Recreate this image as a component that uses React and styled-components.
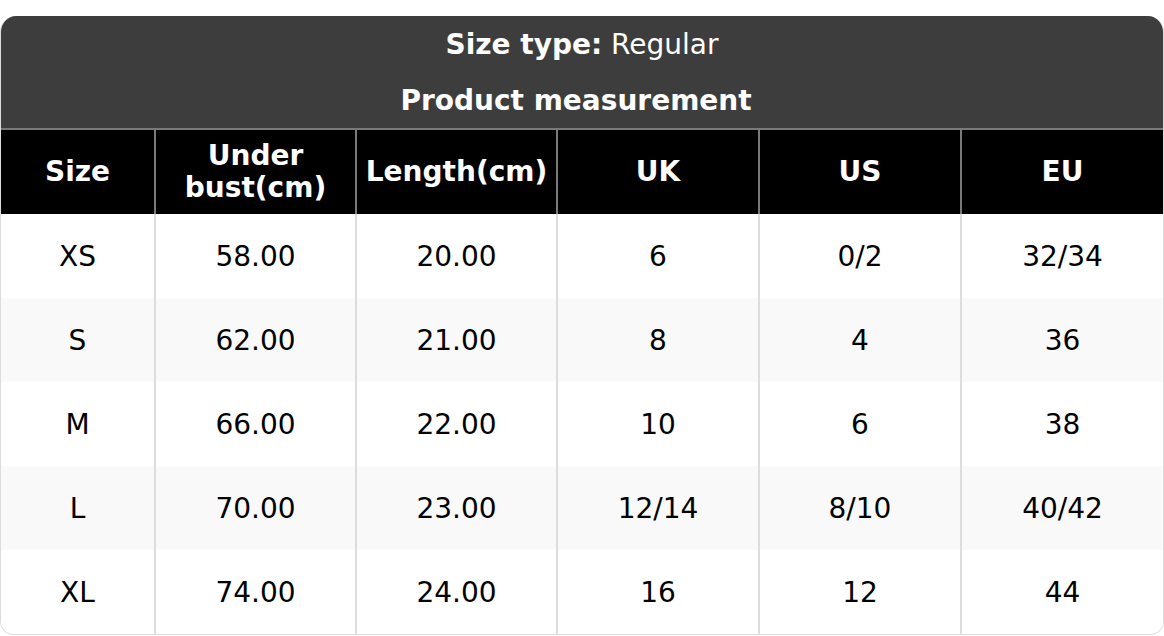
import React from "react";
import styled, { createGlobalStyle } from "styled-components";

const rows = [
  ["XS", "58.00", "20.00", "6", "0/2", "32/34"],
  ["S", "62.00", "21.00", "8", "4", "36"],
  ["M", "66.00", "22.00", "10", "6", "38"],
  ["L", "70.00", "23.00", "12/14", "8/10", "40/42"],
  ["XL", "74.00", "24.00", "16", "12", "44"],
];

const heads = ["Size", "Under bust(cm)", "Length(cm)", "UK", "US", "EU"];
const widths = [154, 201, 201, 202, 202, 202];

function App() {
  return (
    <>
      <GlobalStyle />
      <Card>
        <Table>
          <colgroup>
            {widths.map((w, i) => (
              <col key={i} style={{ width: w }} />
            ))}
          </colgroup>
          <thead>
            <tr>
              <Title colSpan={6}>
                <b>Size type:</b> Regular
              </Title>
            </tr>
            <tr>
              <Title colSpan={6} $bold>
                Product measurement
              </Title>
            </tr>
            <tr>
              {heads.map((h) => (
                <HeadCell key={h}>{h}</HeadCell>
              ))}
            </tr>
          </thead>
          <tbody>
            {rows.map((r, i) => (
              <Row key={r[0]} $striped={i % 2 === 1}>
                {r.map((c, j) => (
                  <Cell key={j}>{c}</Cell>
                ))}
              </Row>
            ))}
          </tbody>
        </Table>
      </Card>
    </>
  );
}

const GlobalStyle = createGlobalStyle`
  html, body {
    margin: 0;
    background: #fff;
    font-family: "DejaVu Sans", "Liberation Sans", sans-serif;
  }
`;

const Card = styled.div`
  margin-top: 16px;
  width: 1164px;
  box-sizing: border-box;
  border-radius: 16px 16px 14px 14px;
  overflow: hidden;
  border: 1px solid #dcdcdc;
  border-top: none;
`;

const Table = styled.table`
  width: 100%;
  table-layout: fixed;
  border-collapse: collapse;
  font-size: 28px;
`;

const Title = styled.th`
  background: #3d3d3d;
  color: #fff;
  height: 56px;
  padding: 0 ${(p) => (p.$bold ? "12px" : "0")} 0 0;
  text-align: center;
  font-weight: ${(p) => (p.$bold ? 700 : 400)};
  b {
    font-weight: 700;
  }
`;

const HeadCell = styled.th`
  background: #000;
  color: #fff;
  font-weight: 700;
  height: 84px;
  padding: 0 6px;
  line-height: 32px;
  text-align: center;
  border-top: 2px solid #7a7a7a;
  border-left: 2px solid #7a7a7a;
  &:first-child {
    border-left: none;
  }
`;

const Row = styled.tr`
  background: ${(p) => (p.$striped ? "#f9f9f9" : "#fff")};
`;

const Cell = styled.td`
  height: 84px;
  padding: 0;
  text-align: center;
  color: #000;
  border-left: 2px solid #dddddd;
  &:first-child {
    border-left: none;
  }
`;

export default App;
